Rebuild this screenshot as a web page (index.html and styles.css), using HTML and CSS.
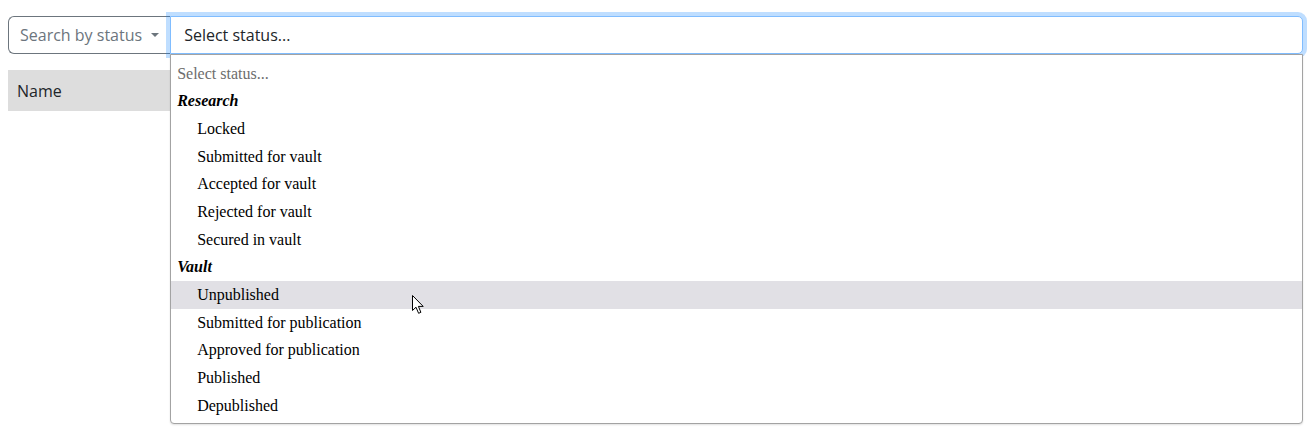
FILE: index.html
```html
<!DOCTYPE html>
<html lang="en">
<head>
<meta charset="utf-8">
<title>Search by status</title>
<link rel="stylesheet" href="styles.css">
</head>
<body>
<div class="page">
  <div class="input-group">
    <button class="btn-status" type="button">Search by status<span class="caret"></span></button>
    <div class="select-wrap">
      <div class="select-box">Select status...</div>
      <ul class="listbox">
        <li class="opt placeholder">Select status...</li>
        <li class="opt group">Research</li>
        <li class="opt child">Locked</li>
        <li class="opt child">Submitted for vault</li>
        <li class="opt child">Accepted for vault</li>
        <li class="opt child">Rejected for vault</li>
        <li class="opt child">Secured in vault</li>
        <li class="opt group">Vault</li>
        <li class="opt child hover">Unpublished</li>
        <li class="opt child">Submitted for publication</li>
        <li class="opt child">Approved for publication</li>
        <li class="opt child">Published</li>
        <li class="opt child">Depublished</li>
      </ul>
    </div>
  </div>
  <table class="data-table">
    <thead>
      <tr><th>Name</th></tr>
    </thead>
  </table>
</div>
<svg class="cursor" width="13" height="20" viewBox="0 0 13 20" xmlns="http://www.w3.org/2000/svg">
  <path d="M0.5 0.5 L0.5 15.5 L4 12.2 L6.6 18.3 L8.9 17.3 L6.4 11.4 L11.2 11.4 Z" fill="#ffffff" stroke="#000000" stroke-width="1" stroke-linejoin="miter"/>
</svg>
</body>
</html>
```

FILE: styles.css
```css
* { box-sizing: border-box; }

html {
  height: 100%;
  margin: 0;
  padding: 0;
  background: #ffffff;
}

body {
  margin: 0;
  min-height: 100%;
  padding: 16px 8px 8px 8px;
  font-family: "Open Sans", "Liberation Sans", sans-serif;
  font-size: 16px;
  color: #212529;
  background: #ffffff;
}

.page {
  width: 1295px;
  min-height: 420px;
}

.input-group {
  display: flex;
  align-items: stretch;
  height: 38px;
  position: relative;
  z-index: 2;
}

.btn-status {
  flex: 0 0 162px;
  display: flex;
  align-items: center;
  padding: 0 11px;
  font-family: "Open Sans", "Liberation Sans", sans-serif;
  font-size: 16px;
  color: #6c757d;
  background: #ffffff;
  border: 1px solid #6c757d;
  border-right: 0;
  border-radius: 6px 0 0 6px;
  white-space: nowrap;
}

.caret {
  display: inline-block;
  margin-left: 9px;
  border-top: 4px solid #6c757d;
  border-left: 4px solid transparent;
  border-right: 4px solid transparent;
}

.select-wrap {
  position: relative;
  flex: 1 1 auto;
}

.select-box {
  height: 38px;
  display: flex;
  align-items: center;
  padding: 0 12px 0 13px;
  border: 1px solid #80bdff;
  border-radius: 0 5px 5px 0;
  box-shadow: 0 0 0 4px rgba(0, 123, 255, 0.25);
  background: #ffffff;
  color: #212529;
}

.listbox {
  position: absolute;
  left: 0;
  right: 0;
  top: 38px;
  margin: 0;
  padding: 5px 0 3px 0;
  list-style: none;
  background: #ffffff;
  border: 1px solid #a3a3a3;
  border-radius: 0 0 4px 4px;
  box-shadow: 0 1px 2px rgba(0, 0, 0, 0.12);
  font-family: "Liberation Serif", "Times New Roman", serif;
  font-size: 16px;
  color: #000000;
}

.opt {
  height: 27.67px;
  display: flex;
  align-items: center;
  padding-left: 6px;
  white-space: nowrap;
}

.opt.placeholder {
  color: #6d6d6d;
}

.opt.group {
  font-weight: bold;
  font-style: italic;
}

.opt.child {
  padding-left: 26px;
}

.opt.hover {
  background: #e1e0e5;
}

.data-table {
  margin-top: 16px;
  width: 100%;
  border-collapse: collapse;
}

.data-table th {
  height: 41px;
  padding: 0 9px;
  text-align: left;
  font-weight: normal;
  background: #dddddd;
  color: #212529;
}

.cursor {
  position: absolute;
  left: 412px;
  top: 295px;
  z-index: 5;
}
```
